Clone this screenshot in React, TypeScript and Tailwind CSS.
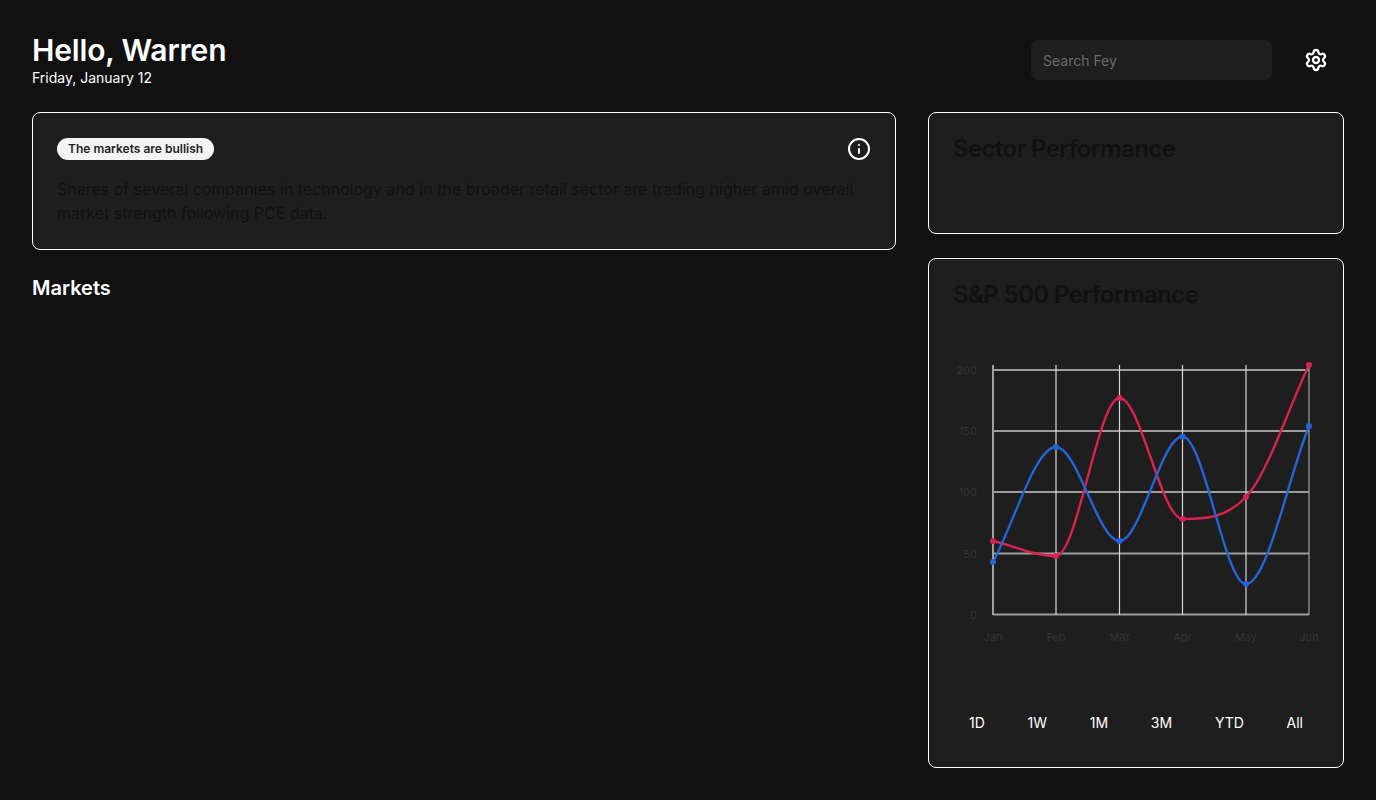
import React from 'react';
import { Settings, Info } from 'lucide-react';

// chart geometry, in svg coords (svg starts at x=953, y=340 on the page)
const xs = [40, 103, 166.5, 229.5, 293, 356];
const months = ['Jan', 'Feb', 'Mar', 'Apr', 'May', 'Jun'];
const ticks = [
  { label: '200', y: 30 },
  { label: '150', y: 91 },
  { label: '100', y: 152 },
  { label: '50', y: 213.5 },
  { label: '0', y: 274.5 },
];
const red = [201, 216, 58, 179, 157, 25];
const blue = [222, 107, 201, 96.5, 244, 86];

// monotone cubic, like chart.js cubicInterpolationMode: 'monotone'
const monotonePath = (ys: number[]) => {
  const n = ys.length;
  const delta = ys.slice(0, -1).map((y, i) => (ys[i + 1] - y) / (xs[i + 1] - xs[i]));
  const m = ys.map((_, i) => {
    if (i === 0) return delta[0];
    if (i === n - 1) return delta[n - 2];
    return Math.sign(delta[i - 1]) !== Math.sign(delta[i]) ? 0 : (delta[i - 1] + delta[i]) / 2;
  });
  for (let i = 0; i < n - 1; i++) {
    const a = m[i] / delta[i];
    const b = m[i + 1] / delta[i];
    const s = a * a + b * b;
    if (s > 9) {
      const k = 3 / Math.sqrt(s);
      m[i] = a * k * delta[i];
      m[i + 1] = b * k * delta[i];
    }
  }
  let d = `M${xs[0]} ${ys[0]}`;
  for (let i = 1; i < n; i++) {
    const dx = (xs[i] - xs[i - 1]) / 3;
    d += ` C${xs[i - 1] + dx} ${ys[i - 1] + m[i - 1] * dx} ${xs[i] - dx} ${ys[i] - m[i] * dx} ${xs[i]} ${ys[i]}`;
  }
  return d;
};

const PerformanceChart = () => (
  <svg width="366" height="320" viewBox="0 0 366 320" className="block mt-[33px]">
    {ticks.map((t) => (
      <g key={t.label}>
        <line x1="40" x2="356" y1={t.y} y2={t.y} stroke="#9c9c9c" strokeWidth="2" />
        <text x="24" y={t.y + 4} textAnchor="end" fontSize="11" fill="#333333" fontFamily="Inter, sans-serif">{t.label}</text>
      </g>
    ))}
    {xs.map((x, i) => (
      <g key={x}>
        <line x1={x} x2={x} y1="25" y2="275" stroke={i === 0 || i === 5 ? '#a0a0a0' : '#d8d8d8'} strokeWidth={i === 0 ? 2 : 1.2} />
        <text x={x} y="301" textAnchor="middle" fontSize="11" fill="#333333" fontFamily="Inter, sans-serif">{months[i]}</text>
      </g>
    ))}
    <path d={monotonePath(red)} fill="none" stroke="#d6234f" strokeWidth="2.4" />
    <path d={monotonePath(blue)} fill="none" stroke="#2563d8" strokeWidth="2.4" />
    {red.map((y, i) => <circle key={i} cx={xs[i]} cy={y} r="3" fill="#d6234f" />)}
    {blue.map((y, i) => <circle key={i} cx={xs[i]} cy={y} r="3" fill="#2563d8" />)}
  </svg>
);

const App: React.FC = () => {
  const ranges = ['1D', '1W', '1M', '3M', 'YTD', 'All'];

  return (
    <div className="min-h-screen bg-[#111111] px-8 pt-8 pb-8 font-['Inter',sans-serif] text-white">
      {/* Header */}
      <div className="flex items-start justify-between mb-6">
        <div>
          <h1 className="text-3xl font-semibold tracking-[-0.15px]">Hello, Warren</h1>
          <p className="text-sm">Friday, January 12</p>
        </div>
        <div className="flex items-center gap-4 mt-2">
          <input
            placeholder="Search Fey"
            className="w-[241px] h-10 px-3 rounded-lg bg-[#1e1e1e] text-sm outline-none placeholder:text-[#6b6b6b]"
          />
          <button className="flex items-center justify-center w-14 h-10">
            <Settings size={24} strokeWidth={2.3} />
          </button>
        </div>
      </div>

      <div className="flex gap-8">
        {/* Left column */}
        <div className="w-[864px] shrink-0">
          <div className="p-6 rounded-lg border border-white bg-[#1e1e1e]">
            <div className="flex items-center justify-between mb-4">
              <span className="px-[11px] h-[22px] flex items-center rounded-full bg-[#f4f4f5] text-xs font-semibold text-[#1e1e1e]">
                The markets are bullish
              </span>
              <Info size={24} />
            </div>
            <p className="text-base text-[#111111]">
              Shares of several companies in technology and in the broader retail sector are trading higher amid overall market strength following PCE data.
            </p>
          </div>
          <h2 className="mt-6 text-xl font-semibold">Markets</h2>
        </div>

        {/* Right column */}
        <div className="flex-1 flex flex-col gap-6">
          <div className="h-[122px] p-6 rounded-lg border border-white bg-[#1e1e1e]">
            <h3 className="text-2xl leading-6 font-semibold tracking-tight text-[#111111]">Sector Performance</h3>
          </div>
          <div className="h-[510px] p-6 rounded-lg border border-white bg-[#1e1e1e]">
            <h3 className="text-2xl leading-6 font-semibold tracking-tight text-[#111111]">S&amp;P 500 Performance</h3>
            <PerformanceChart />
            <div className="flex justify-between mt-[43px]">
              {ranges.map((r) => (
                <button key={r} className="h-10 px-4 text-sm text-white">{r}</button>
              ))}
            </div>
          </div>
        </div>
      </div>
    </div>
  );
};

export default App;
